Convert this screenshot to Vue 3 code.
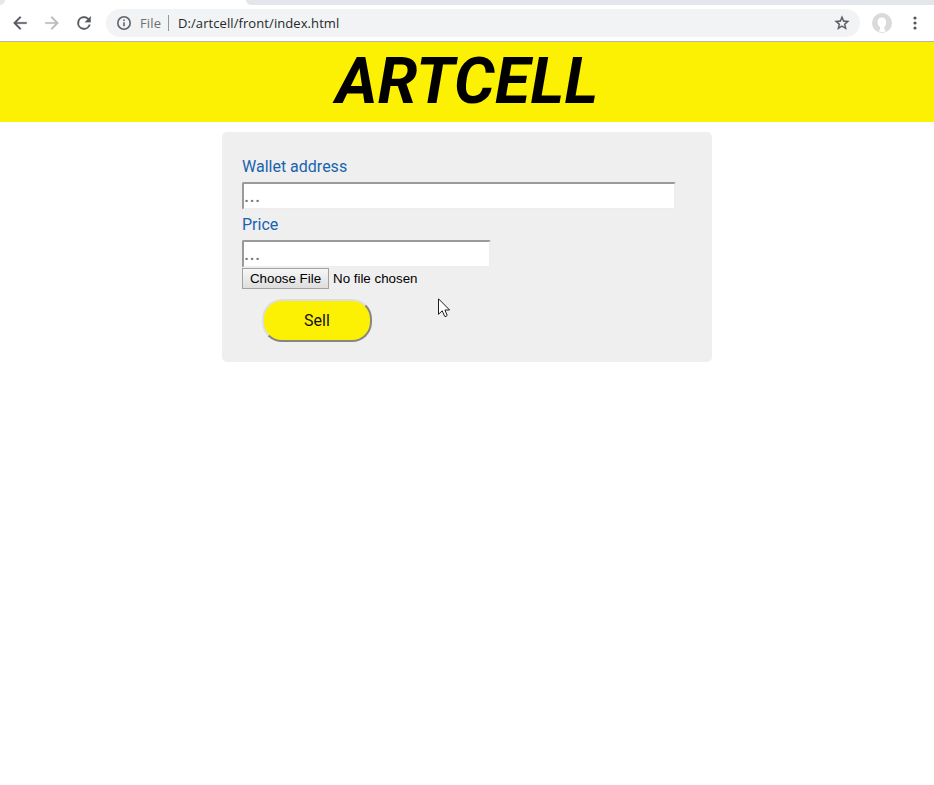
<script setup>
import { ref } from 'vue'

const address = ref('')
const price = ref('')
const url = 'D:/artcell/front/index.html'
</script>

<template>
  <div class="window">
    <div class="tabstrip">
      <div class="edge left"></div>
      <div class="tab"></div>
      <div class="edge right"></div>
    </div>
    <header class="toolbar">
      <svg class="nav" viewBox="0 0 24 24"><path d="M20 11H7.83l5.59-5.59L12 4l-8 8 8 8 1.41-1.41L7.83 13H20v-2z" /></svg>
      <svg class="nav disabled" viewBox="0 0 24 24"><path d="M12 4l-1.41 1.41L16.17 11H4v2h12.17l-5.58 5.59L12 20l8-8z" /></svg>
      <svg class="nav" viewBox="0 0 24 24"><path d="M17.65 6.35A7.96 7.96 0 0 0 12 4a8 8 0 1 0 7.73 10h-2.08A6 6 0 1 1 12 6c1.66 0 3.14.69 4.22 1.78L13 11h7V4l-2.35 2.35z" /></svg>
      <div class="omnibox">
        <svg class="info" viewBox="0 0 16 16"><circle cx="8" cy="8" r="6.2" /><path d="M8 7.2v4M8 4.4v1.6" /></svg>
        <span class="scheme">File</span>
        <span class="divider"></span>
        <span class="url">{{ url }}</span>
        <svg class="star" viewBox="1 1 22 22"><path d="M22 9.24l-7.19-.62L12 2 9.19 8.63 2 9.24l5.46 4.73L5.82 21 12 17.27 18.18 21l-1.63-7.03L22 9.24zM12 15.4l-3.76 2.27 1-4.28-3.32-2.88 4.38-.38L12 6.1l1.71 4.04 4.38.38-3.32 2.88 1 4.28L12 15.4z" /></svg>
      </div>
      <svg class="avatar" viewBox="0 0 20 20">
        <circle cx="10" cy="10" r="10" fill="#dadada" />
        <path d="M9.900 4.600c-2.900 0-4.400 2-4.300 4.600.1 2.500 1 4 2.400 4.900v2.100c-.2.900-1 1-1.800 1.800 1.500 1 3.500 1.200 5.600.9l2.100-.5c-.4-1.300-1.400-1.300-1.600-2.600v-1.700c1.100-1 1.800-2.600 1.800-4.600 0-3-1.500-4.900-4.200-4.900z" fill="#fff" />
      </svg>
      <svg class="menu" viewBox="0 0 4 16"><circle cx="2" cy="3" r="1.600" /><circle cx="2" cy="8" r="1.600" /><circle cx="2" cy="13" r="1.600" /></svg>
    </header>

    <h1 class="banner">ARTCELL</h1>

    <main class="card">
      <label class="label" for="address">Wallet address</label>
      <input id="address" v-model="address" class="field wide" placeholder="..." />
      <label class="label" for="price">Price</label>
      <input id="price" v-model="price" class="field narrow" placeholder="..." />
      <div class="file-row">
        <button class="choose" type="button">Choose File</button>
        <span>No file chosen</span>
      </div>
      <button class="sell" type="button">Sell</button>
    </main>

    <svg class="cursor" viewBox="0 0 13 20"><path d="M.5.8v15.500l3.700-3.500 2.500 5.500q1.400.9 2.500-.9L6.900 12h4.700z" /></svg>
  </div>
</template>

<style>
body {
  background: #fff;
}
</style>

<style scoped>
.window {
  position: relative;
  height: 785px;
  overflow: hidden;
  background: #fff;
  font-family: Roboto, sans-serif;
}
.tabstrip {
  display: flex;
  height: 5px;
  background: #fff;
}
.edge {
  background: #e3e7eb;
}
.left {
  width: 5px;
  border-bottom-right-radius: 5px;
}
.tab {
  width: 241px;
}
.right {
  flex: 1;
  border-bottom-left-radius: 6px;
}
.toolbar {
  box-sizing: border-box;
  display: flex;
  align-items: center;
  height: 37px;
  padding: 0 17.5px 0 10px;
  border-bottom: 1px solid #b3b4b6;
}
.nav {
  width: 20px;
  height: 20px;
  margin-right: 12px;
  fill: #55585d;
  stroke: #55585d;
  stroke-width: 0.3;
}
.disabled {
  fill: #b9babc;
  stroke: #b9babc;
}
.omnibox {
  box-sizing: border-box;
  display: flex;
  align-items: center;
  width: 754px;
  height: 28px;
  padding: 0 10px;
  border-radius: 14px;
  background: #f1f3f4;
  font: 14px/28px "Open Sans", sans-serif;
}
.info {
  width: 16px;
  height: 16px;
  margin-right: 8px;
  fill: none;
  stroke: #5f6368;
  stroke-width: 1.6;
}
.scheme {
  width: 28px;
  font-size: 13px;
  letter-spacing: 0.15px;
  color: #6c7075;
}
.divider {
  width: 1px;
  height: 16px;
  margin-right: 9px;
  background: #96999c;
}
.url {
  flex: 1;
  font-size: 13px;
  letter-spacing: 0.08px;
  color: #26282b;
}
.star {
  width: 16px;
  height: 16px;
  fill: #55585d;
  stroke: #55585d;
  stroke-width: 0.4;
}
.avatar {
  width: 20px;
  height: 20px;
  margin-left: 12px;
}
.menu {
  width: 4px;
  height: 16px;
  margin-left: auto;
  fill: #55585d;
}
.banner {
  height: 80px;
  margin: 0;
  background: #fcf003;
  color: #000;
  font: italic bold 64px/79px Roboto, sans-serif;
  letter-spacing: 0.4px;
  text-align: center;
}
.card {
  box-sizing: border-box;
  display: flex;
  flex-direction: column;
  align-items: flex-start;
  width: 490px;
  height: 230px;
  margin: 10px auto 0;
  padding: 20px;
  border-radius: 5px;
  background: #efefef;
}
.label {
  height: 30px;
  color: #1763ad;
  font-size: 16px;
  line-height: 30px;
}
.field {
  box-sizing: border-box;
  height: 28px;
  padding: 1px 0 3px;
  border: 2px solid;
  border-color: #9a9a9a #eee #eee #9a9a9a;
  border-radius: 2px;
  outline: none;
  background: #fff;
  font: 20px/20px Roboto, sans-serif;
  letter-spacing: 0.2px;
}
.field::placeholder {
  color: #757575;
  opacity: 1;
}
.wide {
  width: 434px;
}
.narrow {
  width: 249px;
}
.file-row {
  display: flex;
  align-items: center;
  gap: 4px;
  height: 21px;
  font: 13.333px "Liberation Sans", sans-serif;
  color: #000;
}
.choose {
  box-sizing: border-box;
  width: 87px;
  height: 21px;
  padding: 0;
  border: 1px solid #a2a2a2;
  border-radius: 0;
  background: linear-gradient(#f6f6f6, #dedede);
  font: inherit;
  color: #000;
}
.sell {
  box-sizing: border-box;
  width: 110px;
  height: 43px;
  margin: 10px 0 0 20px;
  padding: 0;
  border: 2px solid;
  border-color: #dedede #868686 #868686 #dedede;
  border-radius: 20px;
  background: #fcf003;
  color: #111;
  font: 16px Roboto, sans-serif;
}
.cursor {
  position: absolute;
  left: 438px;
  top: 298px;
  width: 13px;
  height: 20px;
  fill: #fff;
  stroke: #1c1c22;
  stroke-width: 1;
}
</style>
